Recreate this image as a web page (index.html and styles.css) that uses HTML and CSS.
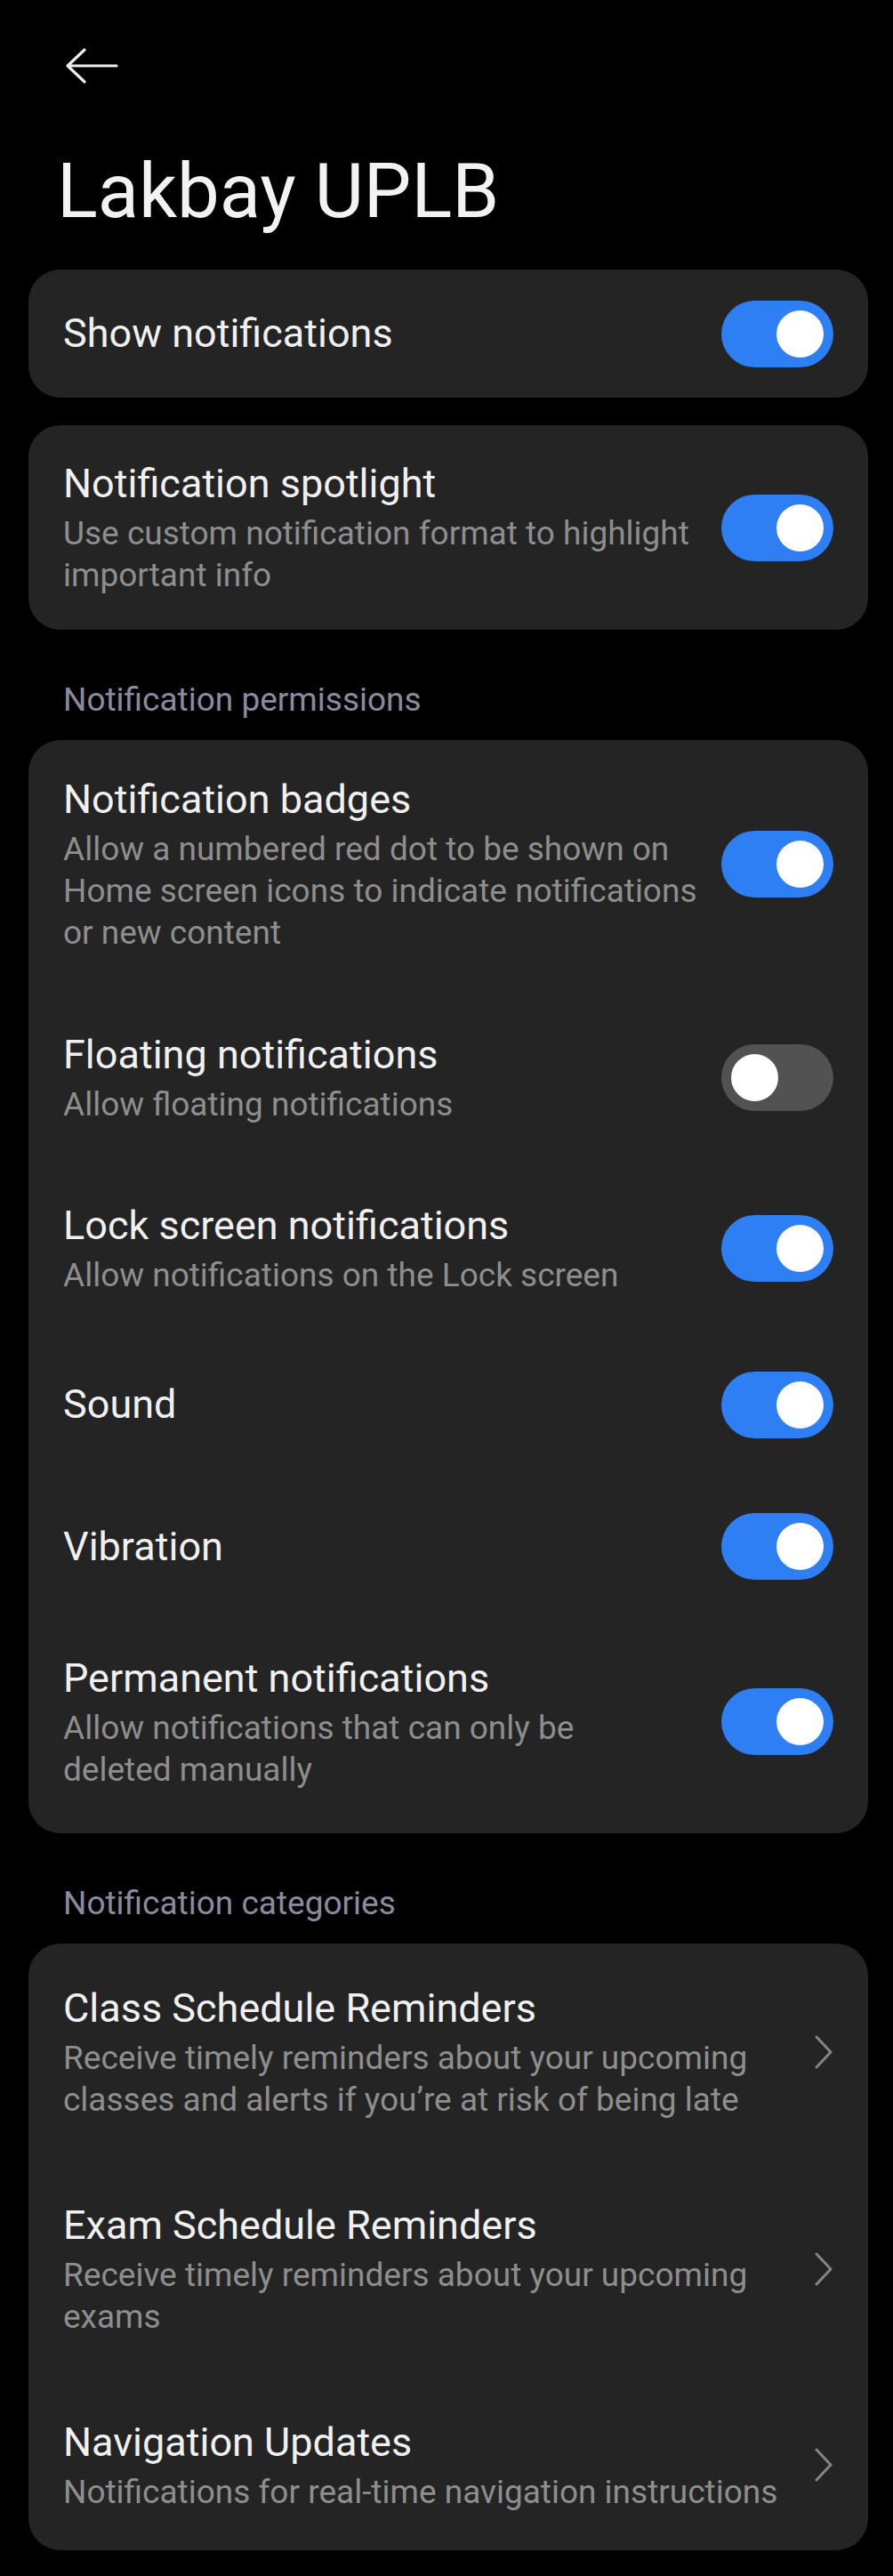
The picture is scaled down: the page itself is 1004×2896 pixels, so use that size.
FILE: index.html
```html
<!DOCTYPE html>
<html lang="en">
<head>
<meta charset="utf-8">
<title>Lakbay UPLB – Notifications</title>
<link rel="stylesheet" href="styles.css">
</head>
<body>
<main class="page">
  <header class="topbar">
    <svg class="back" width="60" height="42" viewBox="0 0 60 42" aria-label="Back">
      <path d="M22 3 L3 21 L22 39 M3 21 H58" fill="none" stroke="#ececec" stroke-width="3.2" stroke-linecap="round" stroke-linejoin="round"/>
    </svg>
  </header>
  <h1 class="title">Lakbay UPLB</h1>

  <section class="card card--single">
    <div class="row">
      <div class="row-text"><div class="row-title">Show notifications</div></div>
      <span class="switch is-on"></span>
    </div>
  </section>

  <section class="card card--std">
    <div class="row">
      <div class="row-text">
        <div class="row-title">Notification spotlight</div>
        <div class="row-sub">Use custom notification format to highlight important info</div>
      </div>
      <span class="switch is-on"></span>
    </div>
  </section>

  <h2 class="section-label">Notification permissions</h2>
  <section class="card card--list">
    <div class="row">
      <div class="row-text">
        <div class="row-title">Notification badges</div>
        <div class="row-sub">Allow a numbered red dot to be shown on Home screen icons to indicate notifications or new content</div>
      </div>
      <span class="switch is-on"></span>
    </div>
    <div class="row">
      <div class="row-text">
        <div class="row-title">Floating notifications</div>
        <div class="row-sub">Allow floating notifications</div>
      </div>
      <span class="switch is-off"></span>
    </div>
    <div class="row">
      <div class="row-text">
        <div class="row-title">Lock screen notifications</div>
        <div class="row-sub">Allow notifications on the Lock screen</div>
      </div>
      <span class="switch is-on"></span>
    </div>
    <div class="row">
      <div class="row-text"><div class="row-title">Sound</div></div>
      <span class="switch is-on"></span>
    </div>
    <div class="row">
      <div class="row-text"><div class="row-title">Vibration</div></div>
      <span class="switch is-on"></span>
    </div>
    <div class="row">
      <div class="row-text">
        <div class="row-title">Permanent notifications</div>
        <div class="row-sub">Allow notifications that can only be deleted&nbsp;manually</div>
      </div>
      <span class="switch is-on"></span>
    </div>
  </section>

  <h2 class="section-label">Notification categories</h2>
  <section class="card card--nav">
    <div class="row row--link">
      <div class="row-text">
        <div class="row-title">Class Schedule Reminders</div>
        <div class="row-sub">Receive timely reminders about your upcoming classes and alerts if you’re at risk of being late</div>
      </div>
      <svg class="chev" width="22" height="38" viewBox="0 0 22 38"><path d="M3 2 L19 19 L3 36" fill="none" stroke="#858585" stroke-width="3" stroke-linecap="round" stroke-linejoin="round"/></svg>
    </div>
    <div class="row row--link">
      <div class="row-text">
        <div class="row-title">Exam Schedule Reminders</div>
        <div class="row-sub">Receive timely reminders about your upcoming exams</div>
      </div>
      <svg class="chev" width="22" height="38" viewBox="0 0 22 38"><path d="M3 2 L19 19 L3 36" fill="none" stroke="#858585" stroke-width="3" stroke-linecap="round" stroke-linejoin="round"/></svg>
    </div>
    <div class="row row--link">
      <div class="row-text">
        <div class="row-title">Navigation Updates</div>
        <div class="row-sub">Notifications for real-time navigation instructions</div>
      </div>
      <svg class="chev" width="22" height="38" viewBox="0 0 22 38"><path d="M3 2 L19 19 L3 36" fill="none" stroke="#858585" stroke-width="3" stroke-linecap="round" stroke-linejoin="round"/></svg>
    </div>
  </section>
</main>
</body>
</html>
```

FILE: styles.css
```css
html, body {
  margin: 0;
  padding: 0;
  background: #000;
}

body {
  font-family: Roboto, "Liberation Sans", sans-serif;
  color: #f0f0f0;
}

.page {
  padding: 0 28px 0 32px;
  width: 944px;
}

.topbar {
  padding: 53px 0 0 41px;
  height: 42px;
}

.back {
  display: block;
}

.title {
  margin: 70px 0 38px;
  padding-left: 32px;
  font-size: 85px;
  line-height: 100px;
  font-weight: 400;
  color: #f2f2f2;
}

.card {
  background: #242424;
  border-radius: 36px;
  margin-top: 31px;
}

.row {
  display: flex;
  align-items: center;
  gap: 18px;
  padding: 42.33px 39px;
}

.card--list .row:first-child {
  padding-top: 39px;
  padding-bottom: 44px;
}

.card--list .row:last-child {
  padding-top: 40px;
  padding-bottom: 48px;
}

.card--single .row {
  padding-top: 34.5px;
  padding-bottom: 34.5px;
}

.card--std .row {
  padding-top: 38px;
  padding-bottom: 38px;
}

.card--nav .row {
  padding-top: 45px;
  padding-bottom: 45px;
  gap: 24px;
}

.card--nav .row:last-child {
  padding-bottom: 42px;
}

.row-text {
  flex: 1;
  min-width: 0;
}

.row-title {
  font-size: 45px;
  line-height: 56px;
  color: #f0f0f0;
}

.row-sub {
  margin-top: 4px;
  font-size: 37px;
  line-height: 47px;
  color: #8e8e8e;
}

.section-label {
  margin: 55px 0 21px;
  padding-left: 39px;
  font-size: 37px;
  line-height: 48px;
  font-weight: 400;
  color: #8b8b9d;
}

.section-label + .card {
  margin-top: 0;
}

.switch {
  flex: none;
  position: relative;
  width: 126px;
  height: 75px;
  border-radius: 38px;
  background: #2f7ff4;
}

.switch::after {
  content: "";
  position: absolute;
  top: 11px;
  right: 11px;
  width: 53px;
  height: 53px;
  border-radius: 50%;
  background: #fff;
}

.switch.is-off {
  background: #525252;
}

.switch.is-off::after {
  right: auto;
  left: 11px;
}

.chev {
  flex: none;
  display: block;
}
```
